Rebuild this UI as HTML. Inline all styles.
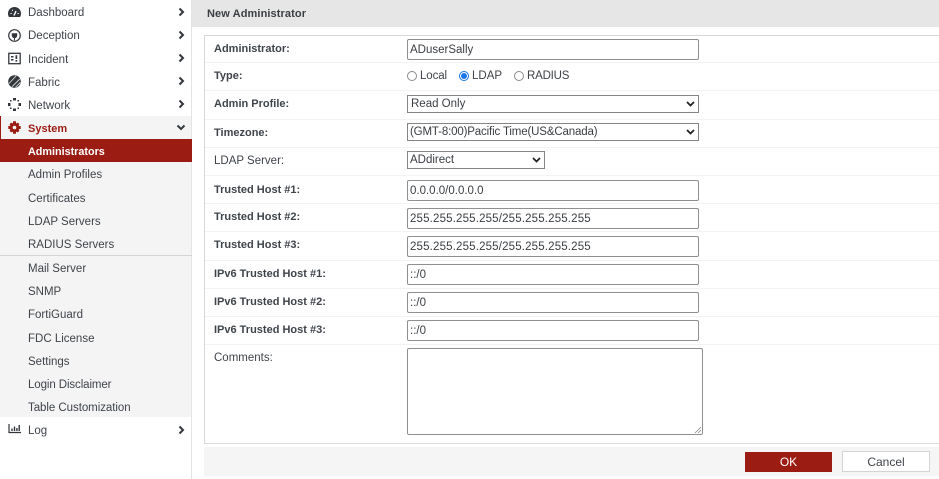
<!DOCTYPE html>
<html><head><meta charset="utf-8"><style>
html,body{margin:0;padding:0;background:#fff}
body{width:939px;height:479px;position:relative;overflow:hidden;font-family:"Liberation Sans",sans-serif;font-size:11.5px;color:#3f444a}
.a{position:absolute;white-space:nowrap}
.m{position:absolute;left:28px;line-height:14px;white-space:nowrap;margin-top:1px}
.c{position:absolute;left:177px;width:8px;height:10px}
.i{position:absolute;left:8px;width:13px;height:13px}
.l{position:absolute;left:214px;line-height:14px;white-space:nowrap;color:#3f444a;font-weight:bold;font-size:11px;margin-top:1px}
.n{font-weight:normal;font-size:11.5px}
.d{position:absolute;left:205px;right:0;height:1px;background:#f3f3f3}
.f{position:absolute;left:407px;width:292px;box-sizing:border-box;border:1px solid #8f8f8f;border-radius:2px;background:#fff;height:21px;line-height:19px;padding:1px 0 0 2px;font-size:11.5px;color:#3a3e43;white-space:nowrap}
.s{border-color:#858585;border-radius:0;height:18px;line-height:16px;padding:0 0 0 2px}
.s svg{position:absolute;right:3px;top:5px}
</style></head><body>
<div class="a" style="left:0;top:0;width:191px;height:479px;background:#fff;border-right:1px solid #e4e4e4"></div>
<div class="a" style="left:0;top:116px;width:191px;height:301px;background:#f4f4f4"></div>
<div class="a" style="left:0;top:116px;width:1px;height:23px;background:#9b1c13"></div>
<div class="a" style="left:0;top:139px;width:192px;height:23px;background:#9b1c13"></div>
<div class="a" style="left:0;top:255px;width:192px;height:1px;background:#d4d4d4"></div>

<svg class="i" style="top:6px" viewBox="0 0 13 13"><path d="M6.5 1C2.8 1 0 3.800 0 7.500c0 1.500.4 2.700 1 3.500h11c.6-.8 1-2 1-3.500C13 3.800 10.200 1 6.500 1z" fill="#33373c"/><path d="M6 9.500L8 5" stroke="#fff" stroke-width="1.400"/><path d="M2.500 7.500h1.300M9.500 7.500h1.300M4 4.300h1" stroke="#fff" stroke-width="1.100"/></svg>
<svg class="i" style="top:29px" viewBox="0 0 13 13"><circle cx="6.500" cy="6.500" r="5.800" fill="none" stroke="#33373c" stroke-width="1.200"/><path d="M3.800 4.300h5.400v2.200a2.700 2.700 0 0 1-5.400 0zM6 8.500h1v3H6z" fill="#33373c"/></svg>
<svg class="i" style="top:52px" viewBox="0 0 13 13"><rect x=".8" y="1.300" width="11.400" height="10.400" fill="none" stroke="#33373c" stroke-width="1.300"/><path d="M3 4h2.500v1.500H3zM3 7h2.500v1.500H3zM7.500 3.300h1.700V7H7.500zM7.500 8h1.700v1.600H7.500z" fill="#33373c"/></svg>
<svg class="i" style="top:75px" viewBox="0 0 13 13"><circle cx="6.500" cy="6.500" r="6.300" fill="#33373c"/><path d="M4 11.800L11.800 4M7.500 12.300L12.300 7.500M1 8.500L8 1" stroke="#ddd" stroke-width=".9"/></svg>
<svg class="i" style="top:98px" viewBox="0 0 13 13"><path d="M5 0h3v2.500H5zM5 10.500h3V13H5zM0 5h2.500v3H0zM10.500 5H13v3h-2.500z" fill="#33373c"/><path d="M2 2h1.500v1.500H2zM9.500 2H11v1.500H9.500zM2 9.500h1.500V11H2zM9.500 9.500H11V11H9.500z" fill="#33373c"/></svg>
<svg class="i" style="top:121px" viewBox="0 0 13 13"><circle cx="6.500" cy="6.500" r="3.300" fill="none" stroke="#9b1c13" stroke-width="3"/><path d="M5 .3h3v3H5zM5 9.700h3v3H5zM.3 5h3v3h-3zM9.700 5h3v3h-3zM1.500 3.200L3.200 1.500 5.200 3.500 3.500 5.200zM9.800 1.500l1.700 1.700L9.500 5.200 7.800 3.500zM3.500 7.800l1.700 1.700-2 2-1.700-1.700zM9.500 7.800l2 2-1.700 1.700-2-2z" fill="#9b1c13"/></svg>
<svg class="i" style="top:422px" viewBox="0 0 13 13"><path d="M1 2v8.500h12" fill="none" stroke="#33373c" stroke-width="1.200"/><path d="M3.300 6.500h1.400V9H3.300zM5.800 4.500h1.400V9H5.800zM8.200 6h1.400v3H8.200zM10.500 3h1.400v6h-1.400z" fill="#33373c"/></svg>

<div class="m" style="top:5px">Dashboard</div>
<div class="m" style="top:28px">Deception</div>
<div class="m" style="top:52px">Incident</div>
<div class="m" style="top:75px">Fabric</div>
<div class="m" style="top:98px">Network</div>
<div class="m" style="top:121px;color:#9b1c13;font-weight:bold;font-size:11px">System</div>
<div class="m" style="top:144px;color:#fff;font-weight:bold;font-size:10.8px">Administrators</div>
<div class="m" style="top:167px">Admin Profiles</div>
<div class="m" style="top:191px">Certificates</div>
<div class="m" style="top:214px">LDAP Servers</div>
<div class="m" style="top:237px">RADIUS Servers</div>
<div class="m" style="top:261px">Mail Server</div>
<div class="m" style="top:284px">SNMP</div>
<div class="m" style="top:307px">FortiGuard</div>
<div class="m" style="top:331px">FDC License</div>
<div class="m" style="top:354px">Settings</div>
<div class="m" style="top:377px;letter-spacing:-.1px">Login Disclaimer</div>
<div class="m" style="top:400px;letter-spacing:-.05px">Table Customization</div>
<div class="m" style="top:423px">Log</div>

<svg class="c" style="top:7px" viewBox="0 0 8 10"><path d="M2.500 1.500L6 5 2.500 8.500" fill="none" stroke="#33373c" stroke-width="2"/></svg>
<svg class="c" style="top:30px" viewBox="0 0 8 10"><path d="M2.500 1.500L6 5 2.500 8.500" fill="none" stroke="#33373c" stroke-width="2"/></svg>
<svg class="c" style="top:53px" viewBox="0 0 8 10"><path d="M2.500 1.500L6 5 2.500 8.500" fill="none" stroke="#33373c" stroke-width="2"/></svg>
<svg class="c" style="top:76px" viewBox="0 0 8 10"><path d="M2.500 1.500L6 5 2.500 8.500" fill="none" stroke="#33373c" stroke-width="2"/></svg>
<svg class="c" style="top:99px" viewBox="0 0 8 10"><path d="M2.500 1.500L6 5 2.500 8.500" fill="none" stroke="#33373c" stroke-width="2"/></svg>
<svg class="a" style="left:176px;top:124px" width="10" height="7" viewBox="0 0 10 7"><path d="M1.500 1.500L5 5l3.500-3.500" fill="none" stroke="#33373c" stroke-width="2"/></svg>
<svg class="c" style="top:425px" viewBox="0 0 8 10"><path d="M2.500 1.500L6 5 2.500 8.500" fill="none" stroke="#33373c" stroke-width="2"/></svg>

<div class="a" style="left:192px;top:0;width:747px;height:27px;background:#e6e6e6"></div>
<div class="a" style="left:207px;top:7px;font-weight:bold;font-size:11px;line-height:14px;letter-spacing:.1px;color:#3a3e43">New Administrator</div>

<div class="a" style="left:204px;top:35px;width:735px;height:1px;background:#d8d8d8"></div>
<div class="a" style="left:204px;top:35px;width:1px;height:409px;background:#d8d8d8"></div>
<div class="a" style="left:204px;top:443px;width:735px;height:1px;background:#dcdcdc"></div>

<div class="d" style="top:62px"></div><div class="d" style="top:90px"></div><div class="d" style="top:119px"></div><div class="d" style="top:147px"></div><div class="d" style="top:175px"></div><div class="d" style="top:203px"></div><div class="d" style="top:231px"></div><div class="d" style="top:260px"></div><div class="d" style="top:288px"></div><div class="d" style="top:316px"></div><div class="d" style="top:344px"></div>

<div class="l" style="top:41px">Administrator:</div>
<div class="l" style="top:68px">Type:</div>
<div class="l" style="top:96px">Admin Profile:</div>
<div class="l" style="top:125px">Timezone:</div>
<div class="l n" style="top:153px">LDAP Server:</div>
<div class="l" style="top:182px">Trusted Host #1:</div>
<div class="l" style="top:209px">Trusted Host #2:</div>
<div class="l" style="top:237px">Trusted Host #3:</div>
<div class="l" style="top:266px">IPv6 Trusted Host #1:</div>
<div class="l" style="top:294px">IPv6 Trusted Host #2:</div>
<div class="l" style="top:322px">IPv6 Trusted Host #3:</div>
<div class="l n" style="top:350px">Comments:</div>

<div class="f" style="top:39px">ADuserSally</div>

<svg class="a" style="left:407px;top:71px" width="10" height="10"><circle cx="5" cy="5" r="4.500" fill="#fff" stroke="#8a8a8a"/></svg>
<div class="a" style="left:420px;top:69px;line-height:14px;letter-spacing:-.1px">Local</div>
<svg class="a" style="left:459px;top:71px" width="10" height="10"><circle cx="5" cy="5" r="4.500" fill="#fff" stroke="#1a73e8"/><circle cx="5" cy="5" r="3" fill="#1a73e8"/></svg>
<div class="a" style="left:472px;top:69px;line-height:14px">LDAP</div>
<svg class="a" style="left:514px;top:71px" width="10" height="10"><circle cx="5" cy="5" r="4.500" fill="#fff" stroke="#8a8a8a"/></svg>
<div class="a" style="left:527px;top:69px;line-height:14px;letter-spacing:-.2px">RADIUS</div>

<div class="f s" style="top:95px;line-height:17px;padding-left:3px">Read Only<svg width="9" height="7" viewBox="0 0 9 7"><path d="M1 1l3.500 3.500L8 1" fill="none" stroke="#222" stroke-width="1.800"/></svg></div>
<div class="f s" style="top:123px;line-height:17px;letter-spacing:-.15px">(GMT-8:00)Pacific Time(US&amp;Canada)<svg width="9" height="7" viewBox="0 0 9 7"><path d="M1 1l3.500 3.500L8 1" fill="none" stroke="#222" stroke-width="1.800"/></svg></div>
<div class="f s" style="top:151px;width:138px;line-height:17px">ADdirect<svg width="9" height="7" viewBox="0 0 9 7"><path d="M1 1l3.500 3.500L8 1" fill="none" stroke="#222" stroke-width="1.800"/></svg></div>

<div class="f" style="top:180px">0.0.0.0/0.0.0.0</div>
<div class="f" style="top:208px;letter-spacing:.16px">255.255.255.255/255.255.255.255</div>
<div class="f" style="top:236px;letter-spacing:.16px">255.255.255.255/255.255.255.255</div>
<div class="f" style="top:264px">::/0</div>
<div class="f" style="top:292px">::/0</div>
<div class="f" style="top:320px">::/0</div>
<div class="f" style="top:348px;width:296px;height:87px"><svg class="a" style="right:0;bottom:0" width="8" height="8"><path d="M1 7l6-6M4 7l3-3" stroke="#888" stroke-width=".8"/></svg></div>

<div class="a" style="left:204px;top:447px;width:735px;height:29px;background:#f5f5f5"></div>
<div class="a" style="left:745px;top:452px;width:87px;height:20px;background:#9b1c13;color:#fff;text-align:center;line-height:21px;font-size:12px">OK</div>
<div class="a" style="left:842px;top:451px;width:88px;height:21px;box-sizing:border-box;border:1px solid #d4d4d4;background:#fff;text-align:center;line-height:20px;font-size:12px">Cancel</div>
</body></html>
